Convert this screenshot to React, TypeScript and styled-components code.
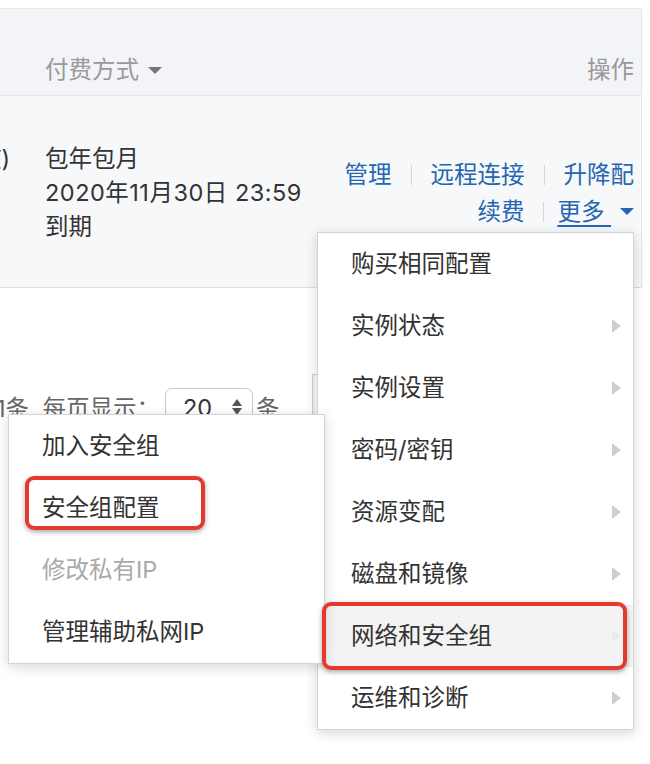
import React from "react";
import styled, { createGlobalStyle, css } from "styled-components";

const GlobalStyle = createGlobalStyle`
  html, body {
    margin: 0;
    padding: 0;
    background: #ffffff;
  }
  body {
    font-family: Inter, "Noto Sans CJK SC", sans-serif;
  }
`;

// page frame
const Page = styled.div`
  position: relative;
  width: 650px;
  height: 764px;
  overflow: hidden;
  padding-top: 8px;
  box-sizing: border-box;
  font-size: 23.5px;
  color: #333;
`;

const Table = styled.div`
  width: 642px;
  box-sizing: border-box;
  border-top: 1px solid #e4e6ea;
  border-right: 1px solid #e4e6ea;
`;

const HeaderRow = styled.div`
  display: grid;
  grid-template-columns: 45px 1fr auto;
  align-items: end;
  height: 86px;
  box-sizing: border-box;
  padding-bottom: 12px;
  background: #f3f4f7;
  color: #999;
  line-height: 26px;
`;

const HeaderCell = styled.div<{ $right?: boolean }>`
  display: flex;
  align-items: center;
  justify-content: ${p => (p.$right ? "flex-end" : "flex-start")};
  padding-right: ${p => (p.$right ? "7px" : "0")};
`;

const Caret = styled.span<{ $color: string }>`
  display: inline-block;
  width: 0;
  height: 0;
  border-left: 7px solid transparent;
  border-right: 7px solid transparent;
  border-top: 7px solid ${p => p.$color};
  margin-left: 9px;
`;

const BodyRow = styled.div`
  display: grid;
  grid-template-columns: 45px 1fr auto;
  height: 193px;
  box-sizing: border-box;
  background: #f7f8fa;
  border-top: 1px solid #e2e4e8;
  border-bottom: 1px solid #dcdde0;
`;

const ClippedCell = styled.div`
  display: flex;
  justify-content: flex-end;
  overflow: hidden;
  white-space: nowrap;
  padding: 46px 35px 0 0;
  line-height: 34px;
`;

const PayCell = styled.div`
  padding-top: 46px;
  line-height: 34px;
  color: #333;
  white-space: nowrap;
`;

const DateText = styled.span`
  letter-spacing: 0.5px;
`;

const ActionCell = styled.div`
  padding: 60px 7px 0 0;
  line-height: 37px;
`;

const ActionLine = styled.div`
  display: flex;
  justify-content: flex-end;
  align-items: center;
  white-space: nowrap;
`;

const Link = styled.span`
  color: #2466b1;
`;

const Sep = styled.span`
  display: inline-block;
  width: 1px;
  height: 20px;
  background: #d6d6d6;
  margin: 0 19px;
`;

const MoreWrap = styled.span`
  position: relative;
  display: inline-flex;
  align-items: center;
  margin-left: -6px;
`;

const MoreText = styled.span`
  color: #2466b1;
  text-decoration: underline;
  text-underline-offset: 5px;
  text-decoration-thickness: 1.5px;
`;

// dropdown menus
const Menu = styled.div<{ $sub?: boolean }>`
  position: absolute;
  width: 317px;
  box-sizing: border-box;
  background: #fff;
  border: 1px solid #d4d4d4;
  box-shadow: 0 3px 12px rgba(0, 0, 0, 0.16);
  text-align: left;
  line-height: 30px;
  z-index: ${p => (p.$sub ? 2 : 1)};
  ${p =>
    p.$sub
      ? css`
          right: calc(100% - 7px);
          bottom: 3px;
        `
      : css`
          top: calc(100% + 2px);
          right: 0;
        `}
`;

const MenuItem = styled.div<{ $active?: boolean; $disabled?: boolean; $mark?: "wide" | "tight" }>`
  position: relative;
  display: flex;
  align-items: center;
  justify-content: space-between;
  height: 62px;
  padding: 0 12px 0 33px;
  white-space: nowrap;
  color: ${p => (p.$disabled ? "#a9a9a9" : "#333")};
  background: ${p => (p.$active ? "#f3f3f3" : "transparent")};

  ${p =>
    p.$mark &&
    css`
      &::after {
        content: "";
        position: absolute;
        border: 4px solid #e3392e;
        border-radius: 9px;
        box-shadow: 0 2px 5px rgba(0, 0, 0, 0.35);
        pointer-events: none;
        z-index: 3;
        ${p.$mark === "wide"
          ? css`
              top: -3px;
              bottom: -3px;
              left: 4px;
              right: 6px;
            `
          : css`
              top: -1px;
              left: 16px;
              width: 180px;
              height: 54px;
              box-sizing: border-box;
            `}
      }
    `}
`;

const Chevron = styled.span<{ $faint?: boolean }>`
  width: 0;
  height: 0;
  border-top: 7px solid transparent;
  border-bottom: 7px solid transparent;
  border-left: 9px solid ${p => (p.$faint ? "#ececec" : "#cfcfcf")};
`;

// pagination
const Pager = styled.div`
  display: flex;
  align-items: center;
  height: 40px;
  margin-top: 99px;
  color: #666;
  white-space: nowrap;
`;

const PagerLabel = styled.div`
  width: 160px;
  display: flex;
  justify-content: flex-end;
  overflow: hidden;
`;

const Select = styled.div`
  display: flex;
  align-items: center;
  width: 88px;
  height: 38px;
  box-sizing: border-box;
  margin-left: 5px;
  padding-left: 17px;
  border: 1px solid #c9c9c9;
  border-radius: 7px;
  color: #333;
`;

const Spinner = styled.span`
  display: inline-flex;
  flex-direction: column;
  gap: 2px;
  margin-left: 20px;

  &::before,
  &::after {
    content: "";
    width: 0;
    height: 0;
    border-left: 5px solid transparent;
    border-right: 5px solid transparent;
  }
  &::before {
    border-bottom: 7px solid #555;
  }
  &::after {
    border-top: 7px solid #555;
  }
`;

const PagerUnit = styled.span`
  margin-left: 3px;
`;

const JumpBox = styled.div`
  width: 40px;
  height: 64px;
  margin-left: 32px;
  border: 1px solid #cfcfcf;
  box-shadow: inset 2px 0 0 #f0f0f0;
`;

const mainItems = ["购买相同配置", "实例状态", "实例设置", "密码/密钥", "资源变配", "磁盘和镜像", "网络和安全组", "运维和诊断"];

const subItems = [
  { label: "加入安全组" },
  { label: "安全组配置", mark: true },
  { label: "修改私有IP", disabled: true },
  { label: "管理辅助私网IP" },
];

const App = () => {
  return (
    <Page>
      <GlobalStyle />
      <Table>
        <HeaderRow>
          <div />
          <HeaderCell>
            付费方式
            <Caret $color="#777" />
          </HeaderCell>
          <HeaderCell $right>操作</HeaderCell>
        </HeaderRow>
        <BodyRow>
          <ClippedCell>(4核)</ClippedCell>
          <PayCell>
            包年包月
            <br />
            <DateText>2020年11月30日 23:59</DateText>
            <br />
            到期
          </PayCell>
          <ActionCell>
            <ActionLine>
              <Link>管理</Link>
              <Sep />
              <Link>远程连接</Link>
              <Sep />
              <Link>升降配</Link>
            </ActionLine>
            <ActionLine>
              <Link>续费</Link>
              <Sep />
              <MoreWrap>
                <MoreText>更多&nbsp;</MoreText>
                <Caret $color="#2466b1" />
                <Menu>
                  {mainItems.map(label => {
                    const active = label === "网络和安全组";
                    return (
                      <MenuItem key={label} $active={active} $mark={active ? "wide" : undefined}>
                        {label}
                        {label !== "购买相同配置" && <Chevron $faint={active} />}
                        {active && (
                          <Menu $sub>
                            {subItems.map(s => (
                              <MenuItem
                                key={s.label}
                                $disabled={s.disabled}
                                $mark={s.mark ? "tight" : undefined}
                              >
                                {s.label}
                              </MenuItem>
                            ))}
                          </Menu>
                        )}
                      </MenuItem>
                    );
                  })}
                </Menu>
              </MoreWrap>
            </ActionLine>
          </ActionCell>
        </BodyRow>
      </Table>
      <Pager>
        <PagerLabel>共1条, 每页显示：</PagerLabel>
        <Select>
          20
          <Spinner />
        </Select>
        <PagerUnit>条</PagerUnit>
        <JumpBox />
      </Pager>
    </Page>
  );
};

export default App;
